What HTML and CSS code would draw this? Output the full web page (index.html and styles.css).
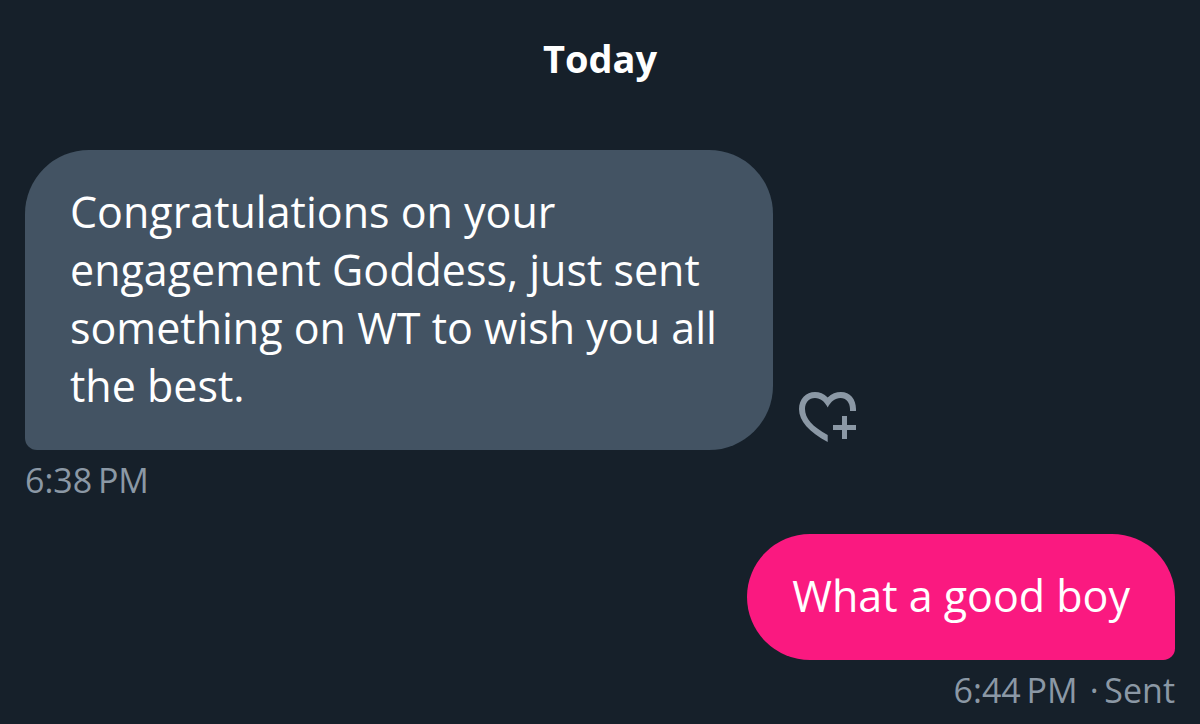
FILE: index.html
```html
<!DOCTYPE html>
<html lang="en">
<head>
<meta charset="utf-8">
<meta name="viewport" content="width=device-width, initial-scale=1">
<title>Messages</title>
<link rel="stylesheet" href="styles.css">
</head>
<body>
<main class="thread">
  <h1 class="day">Today</h1>
  <article class="message received">
    <div class="row">
      <p class="bubble">Congratulations on your engagement Goddess, just sent something on WT to wish you all the best.</p>
      <button class="react" type="button" aria-label="Add reaction">
        <svg viewBox="0 0 58 50" width="58" height="50" fill="currentColor" aria-hidden="true">
          <path d="M28.7 5.5C32.5 1.8 37 0 42 0C51 0 57 7 57 17V19H51V17C51 10.5 47 6 41.5 6C36 6 32 9.5 28.7 15.5C25.5 9.5 21.5 6 16 6C10 6 6 10.5 6 17C6 26 13 34.5 28.7 43V50C10 40 0 29 0 17C0 7 7 0 16 0C20.5 0 25 1.8 28.7 5.5Z"/>
          <path d="M43 24H48V33H57V38H48V47H43V38H34V33H43Z"/>
        </svg>
      </button>
    </div>
    <p class="meta">6:38&#8201;PM</p>
  </article>
  <article class="message sent">
    <p class="bubble">What a good boy</p>
    <p class="meta">6:44&#8201;PM&nbsp;&#8202;·&#8201;Sent</p>
  </article>
</main>
</body>
</html>
```
FILE: styles.css
```css
* { box-sizing: border-box; }
body { margin: 0; background: #16202a; color: #fff; font-family: "Open Sans", "Noto Sans", sans-serif; }
.thread { display: flex; flex-direction: column; padding: 34px 25px 0; }
.day { margin: 0 0 68px; text-align: center; font-size: 38px; line-height: 48px; font-weight: 700; }
.message { display: flex; flex-direction: column; }
.received { align-items: stretch; }
.sent { align-items: flex-end; margin-top: 32px; }
.row { display: flex; align-items: flex-end; gap: 26px; }
.bubble { margin: 0; padding: 33px 45px 35px; font-size: 43px; line-height: 58px; }
.received .bubble { max-width: 65%; border-radius: 64px 64px 64px 12px; background: #435363; }
.sent .bubble { border-radius: 64px 64px 12px 64px; background: #fa1980; }
.react { display: flex; padding: 0 0 8px; border: 0; background: none; color: #8b98a5; }
.meta { margin: 8px 0 0; font-size: 34px; line-height: 44px; color: #8b98a5; }
```
